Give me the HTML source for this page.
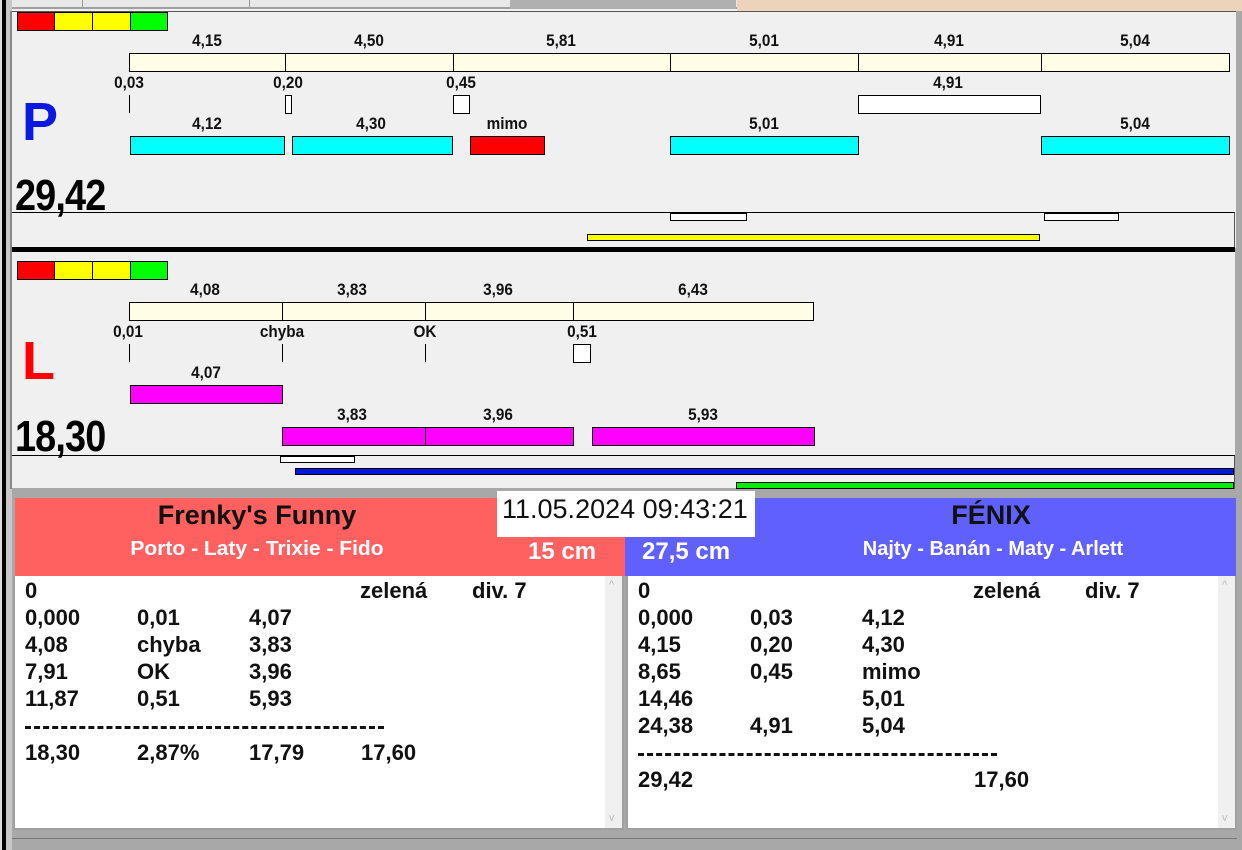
<!DOCTYPE html>
<html><head><meta charset="utf-8">
<style>
*{margin:0;padding:0;box-sizing:border-box}
body{width:1242px;height:850px;overflow:hidden;background:#a8a8a8;position:relative;font-family:"Liberation Sans Narrow","Liberation Sans",sans-serif;}
div,span{position:absolute}
.t{font-weight:bold;font-size:17px;color:#111;white-space:nowrap;transform:translateX(-50%) scaleX(.9);line-height:17px}
.b{border:1px solid #000}
.cr{background:#fffde6}
.cy{background:#00ffff}
.mg{background:#ff00ff}
.w{background:#fff}
.row{font-weight:bold;font-size:22px;color:#111;line-height:22px;white-space:nowrap}
.big{font-weight:bold;font-size:44px;line-height:40px;color:#000;letter-spacing:-1px;transform:scaleX(.86);transform-origin:0 0}
</style></head><body>
<div style="left:0;top:0;width:1242px;height:11px;background:#f0f0f0"></div>
<div style="left:12px;top:0;width:725px;height:9px;background:#e8e8e8;border-bottom:2px solid #a0a0a0"></div>
<div style="left:82px;top:0;width:1px;height:8px;background:#999"></div>
<div style="left:249px;top:0;width:1px;height:8px;background:#999"></div>
<div style="left:510px;top:0;width:226px;height:9px;background:#b0b0b0"></div>
<div style="left:737px;top:0;width:505px;height:11px;background:#eed3bb"></div>
<div style="left:0;top:0;width:2px;height:850px;background:#ddd"></div>
<div style="left:2px;top:0;width:4px;height:850px;background:#000"></div>
<div style="left:6px;top:0;width:6px;height:850px;background:#c8c8c8"></div>
<div style="left:10px;top:11px;width:2px;height:478px;background:#888"></div>
<div style="left:12px;top:11px;width:1225px;height:237px;background:#f0f0f0"></div>
<div style="left:12px;top:11px;width:1225px;height:1px;background:#555"></div>
<div style="left:1236px;top:11px;width:6px;height:480px;background:#a8a8a8"></div>
<div class="b" style="left:17px;top:12px;width:38px;height:19px;background:#f00"></div>
<div class="b" style="left:54px;top:12px;width:39px;height:19px;background:#ff0"></div>
<div class="b" style="left:92px;top:12px;width:39px;height:19px;background:#ff0"></div>
<div class="b" style="left:130px;top:12px;width:38px;height:19px;background:#0f0"></div>

<div class="t" style="left:207px;top:32px">4,15</div>
<div class="t" style="left:369px;top:32px">4,50</div>
<div class="t" style="left:561px;top:32px">5,81</div>
<div class="t" style="left:764px;top:32px">5,01</div>
<div class="t" style="left:949px;top:32px">4,91</div>
<div class="t" style="left:1135px;top:32px">5,04</div>
<div class="b cr" style="left:129px;top:53px;width:157px;height:19px"></div>
<div class="b cr" style="left:285px;top:53px;width:169px;height:19px"></div>
<div class="b cr" style="left:453px;top:53px;width:218px;height:19px"></div>
<div class="b cr" style="left:670px;top:53px;width:189px;height:19px"></div>
<div class="b cr" style="left:858px;top:53px;width:184px;height:19px"></div>
<div class="b cr" style="left:1041px;top:53px;width:189px;height:19px"></div>

<div class="t" style="left:129px;top:74px">0,03</div>
<div class="t" style="left:288px;top:74px">0,20</div>
<div class="t" style="left:461px;top:74px">0,45</div>
<div class="t" style="left:948px;top:74px">4,91</div>
<div style="left:129px;top:95px;width:1px;height:18px;background:#000"></div>
<div class="b w" style="left:285px;top:95px;width:7px;height:19px"></div>
<div class="b w" style="left:453px;top:95px;width:17px;height:19px"></div>
<div class="b w" style="left:858px;top:95px;width:183px;height:19px"></div>

<div class="t" style="left:207px;top:115px">4,12</div>
<div class="t" style="left:371px;top:115px">4,30</div>
<div class="t" style="left:507px;top:115px">mimo</div>
<div class="t" style="left:764px;top:115px">5,01</div>
<div class="t" style="left:1135px;top:115px">5,04</div>
<div class="b cy" style="left:130px;top:136px;width:155px;height:19px"></div>
<div class="b cy" style="left:292px;top:136px;width:161px;height:19px"></div>
<div class="b" style="left:470px;top:136px;width:75px;height:19px;background:#f00"></div>
<div class="b cy" style="left:670px;top:136px;width:189px;height:19px"></div>
<div class="b cy" style="left:1041px;top:136px;width:189px;height:19px"></div>

<div style="left:22px;top:94px;font:bold 54px 'Liberation Sans',sans-serif;color:#0a18e0;line-height:56px">P</div>
<div class="big" style="left:15px;top:176px">29,42</div>
<div style="left:12px;top:212px;width:1223px;height:36px;border-top:1px solid #000;border-right:1px solid #555"></div>
<div class="b w" style="left:670px;top:213px;width:77px;height:8px"></div>
<div class="b w" style="left:1044px;top:213px;width:75px;height:8px"></div>
<div class="b" style="left:587px;top:234px;width:453px;height:7px;background:#ff0"></div>
<div style="left:12px;top:247px;width:1223px;height:5px;background:#000"></div>

<div style="left:12px;top:252px;width:1223px;height:236px;background:#f0f0f0"></div>
<div class="b" style="left:17px;top:261px;width:38px;height:19px;background:#f00"></div>
<div class="b" style="left:54px;top:261px;width:39px;height:19px;background:#ff0"></div>
<div class="b" style="left:92px;top:261px;width:39px;height:19px;background:#ff0"></div>
<div class="b" style="left:130px;top:261px;width:38px;height:19px;background:#0f0"></div>

<div class="t" style="left:205px;top:281px">4,08</div>
<div class="t" style="left:352px;top:281px">3,83</div>
<div class="t" style="left:498px;top:281px">3,96</div>
<div class="t" style="left:693px;top:281px">6,43</div>
<div class="b cr" style="left:129px;top:302px;width:154px;height:19px"></div>
<div class="b cr" style="left:282px;top:302px;width:144px;height:19px"></div>
<div class="b cr" style="left:425px;top:302px;width:149px;height:19px"></div>
<div class="b cr" style="left:573px;top:302px;width:241px;height:19px"></div>

<div class="t" style="left:128px;top:323px">0,01</div>
<div class="t" style="left:282px;top:323px">chyba</div>
<div class="t" style="left:425px;top:323px">OK</div>
<div class="t" style="left:582px;top:323px">0,51</div>
<div style="left:129px;top:344px;width:1px;height:18px;background:#000"></div>
<div style="left:282px;top:344px;width:1px;height:18px;background:#000"></div>
<div style="left:425px;top:344px;width:1px;height:18px;background:#000"></div>
<div class="b w" style="left:573px;top:344px;width:18px;height:19px"></div>

<div class="t" style="left:206px;top:364px">4,07</div>
<div class="b mg" style="left:130px;top:385px;width:153px;height:19px"></div>
<div class="t" style="left:352px;top:406px">3,83</div>
<div class="t" style="left:498px;top:406px">3,96</div>
<div class="t" style="left:703px;top:406px">5,93</div>
<div class="b mg" style="left:282px;top:427px;width:144px;height:19px"></div>
<div class="b mg" style="left:425px;top:427px;width:149px;height:19px"></div>
<div class="b mg" style="left:592px;top:427px;width:223px;height:19px"></div>

<div style="left:22px;top:333px;font:bold 54px 'Liberation Sans',sans-serif;color:#f00;line-height:56px">L</div>
<div class="big" style="left:15px;top:417px">18,30</div>
<div style="left:12px;top:455px;width:1223px;height:34px;border-top:1px solid #000;border-right:1px solid #555"></div>
<div class="b w" style="left:280px;top:456px;width:75px;height:7px"></div>
<div class="b" style="left:295px;top:468px;width:939px;height:7px;background:#0018d8"></div>
<div class="b" style="left:736px;top:482px;width:498px;height:7px;background:#0e0"></div>

<div style="left:12px;top:489px;width:1225px;height:9px;background:#a8a8a8"></div>

<div style="left:15px;top:498px;width:611px;height:78px;background:#ff6060"></div>
<div style="left:625px;top:498px;width:611px;height:78px;background:#6060ff"></div>
<div style="left:497px;top:491px;width:258px;height:46px;background:#fff"></div>
<div style="left:502px;top:494px;font-size:27px;line-height:30px;color:#111;white-space:nowrap">11.05.2024 09:43:21</div>
<div class="t" style="left:257px;top:500px;font-size:27px;line-height:30px;transform:translateX(-50%)">Frenky's Funny</div>
<div class="t" style="left:991px;top:500px;font-size:27px;line-height:30px;transform:translateX(-50%)">FÉNIX</div>
<div class="t" style="left:257px;top:538px;font-size:20px;line-height:22px;color:#fff;transform:translateX(-50%) scaleX(1.05)">Porto - Laty - Trixie - Fido</div>
<div class="t" style="left:993px;top:538px;font-size:20px;line-height:22px;color:#fff;transform:translateX(-50%)">Najty - Banán - Maty - Arlett</div>
<div style="left:528px;top:539px;font-weight:bold;font-size:24px;line-height:26px;color:#fff">15 cm</div>
<div style="left:642px;top:539px;font-weight:bold;font-size:24px;line-height:26px;color:#fff">27,5 cm</div>

<div style="left:13px;top:576px;width:611px;height:254px;background:#fff;border:2px solid #a0a0a0;border-top:none"></div>
<div style="left:605px;top:576px;width:17px;height:252px;background:#f0f0f0;color:#bbb;font-size:11px;text-align:center;line-height:12px"><span style="left:4px;top:3px">^</span><span style="left:4px;top:236px">v</span></div>
<div style="left:626px;top:576px;width:611px;height:254px;background:#fff;border:2px solid #a0a0a0;border-top:none"></div>
<div style="left:1218px;top:576px;width:17px;height:252px;background:#f0f0f0;color:#bbb;font-size:11px;text-align:center;line-height:12px"><span style="left:4px;top:3px">^</span><span style="left:4px;top:236px">v</span></div>

<div class="row" style="left:25px;top:580px">0</div>
<div class="row" style="left:360px;top:580px">zelená</div>
<div class="row" style="left:472px;top:580px">div. 7</div>
<div class="row" style="left:25px;top:607px">0,000</div><div class="row" style="left:137px;top:607px">0,01</div><div class="row" style="left:249px;top:607px">4,07</div>
<div class="row" style="left:25px;top:634px">4,08</div><div class="row" style="left:137px;top:634px">chyba</div><div class="row" style="left:249px;top:634px">3,83</div>
<div class="row" style="left:25px;top:661px">7,91</div><div class="row" style="left:137px;top:661px">OK</div><div class="row" style="left:249px;top:661px">3,96</div>
<div class="row" style="left:25px;top:688px">11,87</div><div class="row" style="left:137px;top:688px">0,51</div><div class="row" style="left:249px;top:688px">5,93</div>
<div style="left:25px;top:726px;width:359px;height:3px;border-top:3px dashed #111"></div>
<div class="row" style="left:25px;top:742px">18,30</div><div class="row" style="left:137px;top:742px">2,87%</div><div class="row" style="left:249px;top:742px">17,79</div><div class="row" style="left:361px;top:742px">17,60</div>

<div class="row" style="left:638px;top:580px">0</div>
<div class="row" style="left:973px;top:580px">zelená</div>
<div class="row" style="left:1085px;top:580px">div. 7</div>
<div class="row" style="left:638px;top:607px">0,000</div><div class="row" style="left:750px;top:607px">0,03</div><div class="row" style="left:862px;top:607px">4,12</div>
<div class="row" style="left:638px;top:634px">4,15</div><div class="row" style="left:750px;top:634px">0,20</div><div class="row" style="left:862px;top:634px">4,30</div>
<div class="row" style="left:638px;top:661px">8,65</div><div class="row" style="left:750px;top:661px">0,45</div><div class="row" style="left:862px;top:661px">mimo</div>
<div class="row" style="left:638px;top:688px">14,46</div><div class="row" style="left:862px;top:688px">5,01</div>
<div class="row" style="left:638px;top:715px">24,38</div><div class="row" style="left:750px;top:715px">4,91</div><div class="row" style="left:862px;top:715px">5,04</div>
<div style="left:638px;top:753px;width:359px;height:3px;border-top:3px dashed #111"></div>
<div class="row" style="left:638px;top:769px">29,42</div><div class="row" style="left:974px;top:769px">17,60</div>

<div style="left:12px;top:838px;width:1225px;height:1px;background:#777"></div>
</body></html>
